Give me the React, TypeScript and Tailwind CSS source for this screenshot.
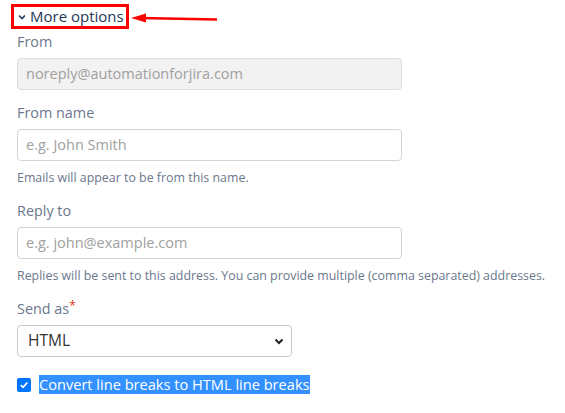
import React from "react";

export default function App() {
  return (
    <div className="relative w-[565px] h-[413px] bg-white overflow-hidden font-['Open_Sans',sans-serif]">
      {/* arrow annotation */}
      <svg className="absolute left-0 top-0" width="565" height="40" viewBox="0 0 565 40">
        <line x1="217" y1="19.5" x2="140" y2="18" stroke="#f00" strokeWidth="2.5" />
        <polygon points="131,18 146,13.5 146,22.5" fill="#f00" />
      </svg>

      <div className="flex pl-[11px] pt-[4px]">
        <div className="flex items-center h-[25px] w-[118px] border-[3px] border-[#f00] pl-[4px]">
          <svg width="8" height="6" viewBox="0 0 8 6" className="mr-[4px] mt-[1px]">
            <path d="M1 1.5 L4 4.5 L7 1.5" fill="none" stroke="#253858" strokeWidth="1.6" />
          </svg>
          <span className="text-[15px] leading-none text-[#253858]">More options</span>
        </div>
      </div>

      <div className="flex flex-col items-start pl-[17px]">
        <div className="mt-[3px] h-[20px] text-[14.4px] leading-[20px] text-[#6b778c]">From</div>
        <div className="mt-[6px] w-[385px] h-[32px] rounded-[4px] border border-[#dcdcdc] bg-[#f2f2f2] flex items-center pl-[8px] text-[14.5px] text-[#a0a0a0]">
          noreply@automationforjira.com
        </div>

        <div className="mt-[13px] h-[20px] text-[14.4px] leading-[20px] text-[#6b778c]">From name</div>
        <div className="mt-[6px] w-[385px] h-[32px] rounded-[4px] border border-[#d4d4d4] bg-white flex items-center pl-[8px] text-[14.5px] text-[#a0a0a0]">
          e.g. John Smith
        </div>
        <div className="mt-[9px] h-[16px] text-[12.4px] leading-[16px] text-[#6b778c]">
          Emails will appear to be from this name.
        </div>

        <div className="mt-[15px] h-[20px] text-[14.4px] leading-[20px] text-[#6b778c]">Reply to</div>
        <div className="mt-[6px] w-[385px] h-[32px] rounded-[4px] border border-[#d4d4d4] bg-white flex items-center pl-[8px] text-[14.5px] text-[#a0a0a0]">
          e.g. john@example.com
        </div>
        <div className="mt-[9px] h-[16px] text-[12.4px] leading-[16px] text-[#6b778c] whitespace-nowrap">
          Replies will be sent to this address. You can provide multiple (comma separated) addresses.
        </div>

        <div className="mt-[15px] h-[20px] text-[14.4px] leading-[20px] text-[#6b778c]">
          Send as<span className="text-[#de350b] relative -top-[4px] text-[12px]">*</span>
        </div>
        <div className="mt-[6px] w-[275px] h-[32px] rounded-[4px] border border-[#c8c8c8] bg-white flex items-center justify-between pl-[10px] pr-[7px] text-[15.5px] text-[#333]">
          <span>HTML</span>
          <svg width="10" height="7" viewBox="0 0 10 7">
            <path d="M1.5 1.5 L5 5 L8.5 1.5" fill="none" stroke="#222" strokeWidth="2" />
          </svg>
        </div>

        <div className="mt-[18px] flex items-center h-[19px]">
          <div className="w-[14px] h-[14px] rounded-[2px] bg-[#0075ff] flex items-center justify-center">
            <svg width="10" height="10" viewBox="0 0 10 10">
              <path d="M1.8 5.2 L4 7.3 L8.3 2.6" fill="none" stroke="#fff" strokeWidth="1.8" />
            </svg>
          </div>
          <span className="ml-[8px] bg-[#3390ff] text-white text-[14.6px] leading-[19px] whitespace-nowrap">
            Convert line breaks to HTML line breaks
          </span>
        </div>
      </div>
    </div>
  );
}
